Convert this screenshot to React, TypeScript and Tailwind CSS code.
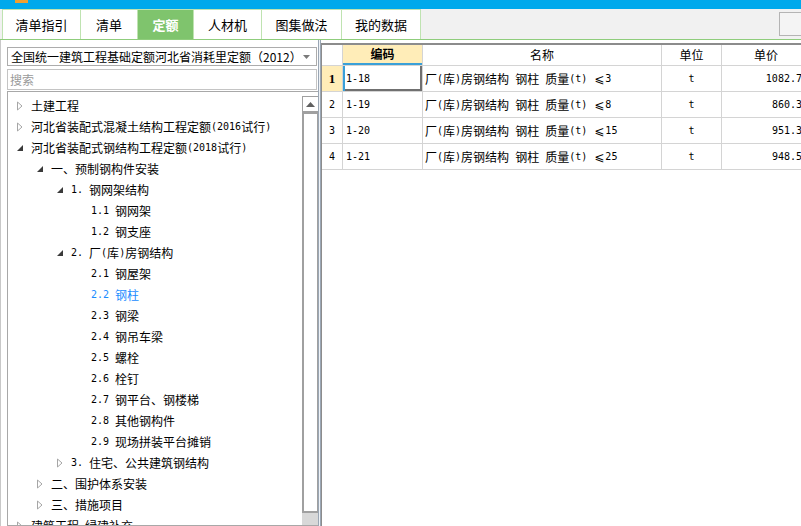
import React from "react";

type Node = { label: string; level: number; state: "open" | "closed" | "leaf"; active?: boolean };

const TREE: Node[] = [
  { label: "土建工程", level: 0, state: "closed" },
  { label: "河北省装配式混凝土结构工程定额(2016试行)", level: 0, state: "closed" },
  { label: "河北省装配式钢结构工程定额(2018试行)", level: 0, state: "open" },
  { label: "一、预制钢构件安装", level: 1, state: "open" },
  { label: "1. 钢网架结构", level: 2, state: "open" },
  { label: "1.1 钢网架", level: 3, state: "leaf" },
  { label: "1.2 钢支座", level: 3, state: "leaf" },
  { label: "2. 厂(库)房钢结构", level: 2, state: "open" },
  { label: "2.1 钢屋架", level: 3, state: "leaf" },
  { label: "2.2 钢柱", level: 3, state: "leaf", active: true },
  { label: "2.3 钢梁", level: 3, state: "leaf" },
  { label: "2.4 钢吊车梁", level: 3, state: "leaf" },
  { label: "2.5 螺栓", level: 3, state: "leaf" },
  { label: "2.6 栓钉", level: 3, state: "leaf" },
  { label: "2.7 钢平台、钢楼梯", level: 3, state: "leaf" },
  { label: "2.8 其他钢构件", level: 3, state: "leaf" },
  { label: "2.9 现场拼装平台摊销", level: 3, state: "leaf" },
  { label: "3. 住宅、公共建筑钢结构", level: 2, state: "closed" },
  { label: "二、围护体系安装", level: 1, state: "closed" },
  { label: "三、措施项目", level: 1, state: "closed" },
  { label: "建筑工程-绿建补充", level: 0, state: "closed" },
];

const ROWS = [
  { code: "1-18", name: "厂(库)房钢结构 钢柱 质量(t) ⩽3", unit: "t", price: "1082.73" },
  { code: "1-19", name: "厂(库)房钢结构 钢柱 质量(t) ⩽8", unit: "t", price: "860.36" },
  { code: "1-20", name: "厂(库)房钢结构 钢柱 质量(t) ⩽15", unit: "t", price: "951.33" },
  { code: "1-21", name: "厂(库)房钢结构 钢柱 质量(t) ⩽25", unit: "t", price: "948.51" },
];

const TABS = [
  { label: "清单指引", w: "w-[79px]" },
  { label: "清单", w: "w-[57px]" },
  { label: "定额", w: "w-[56px]", active: true },
  { label: "人材机", w: "w-[68px]" },
  { label: "图集做法", w: "w-[80px]" },
  { label: "我的数据", w: "w-[79px]" },
];

// half-width runs in a 6px-advance mono, like the old bitmap song font
function Mixed({ text }: { text: string }) {
  const parts = text.split(/([\x20-\x7e]+|⩽)/).filter(Boolean);
  return (
    <>
      {parts.map((p, i) =>
        p === "⩽" ? (
          <span key={i} className="text-[12px] px-[1px]" style={{ fontFamily: '"DejaVu Sans", sans-serif' }}>
            {p}
          </span>
        ) : /^[\x20-\x7e]+$/.test(p) ? (
          <span
            key={i}
            className="text-[10px] whitespace-pre"
            style={{ fontFamily: '"DejaVu Sans Mono", "Liberation Mono", monospace' }}
          >
            {p}
          </span>
        ) : (
          <span key={i}>{p}</span>
        )
      )}
    </>
  );
}

function Arrow({ state }: { state: Node["state"] }) {
  if (state === "closed")
    return (
      <svg width="6" height="10" viewBox="0 0 6 10">
        <path d="M0.5 1 L5 5 L0.5 9 Z" fill="none" stroke="#a6a6a6" />
      </svg>
    );
  if (state === "open")
    return (
      <svg width="6" height="6" viewBox="0 0 6 6">
        <path d="M6 0 L6 6 L0 6 Z" fill="#3a3a3a" />
      </svg>
    );
  return null;
}

export default function App() {
  return (
    <div
      className="w-[801px] h-[526px] overflow-hidden bg-white flex flex-col text-[12px] text-black"
      style={{ fontFamily: '"Noto Sans CJK SC", "Microsoft YaHei", sans-serif' }}
    >
      {/* Title strip */}
      <div className="h-[9px] shrink-0 bg-[#00a9ec] relative">
        <div className="absolute left-[15px] top-0 w-[13px] h-[3px] bg-[#f0a030]" />
      </div>

      {/* Tabs */}
      <div className="h-[31px] shrink-0 bg-[#f1f1f1] flex border-b border-[#8fcd7c] pl-[2px] relative">
        {TABS.map((t, i) => (
          <div
            key={t.label}
            className={`${t.w} h-full flex items-center justify-center text-[13px] border-r border-t border-[#bfe3b1] ${i === 0 ? "border-l" : ""} ${
              t.active ? "bg-[#7fc46d] text-white font-bold" : "bg-white text-black"
            }`}
          >
            {t.label}
          </div>
        ))}
        <div className="absolute left-[779px] top-[3px] w-[30px] h-[24px] border border-[#b4b4b4] bg-[#f4f4f4]" />
      </div>

      {/* Main */}
      <div className="flex flex-1 min-h-0">
        {/* Left panel */}
        <div className="w-[318px] shrink-0 flex flex-col pl-[6px] border-l border-[#c8c8c8]">
          <div className="mt-[7px] h-[19px] w-[310px] border border-[#acacac] flex items-center pl-[3px] pr-[6px]">
            <span className="flex-1 whitespace-nowrap">全国统一建筑工程基础定额河北省消耗里定额（2012）</span>
            <svg width="7" height="4" viewBox="0 0 7 4">
              <path d="M0 0 L7 0 L3.5 4 Z" fill="#7a7a7a" />
            </svg>
          </div>
          <div className="mt-[3px] h-[21px] w-[310px] border border-[#c4c4c4] flex items-center pl-[2px] text-[#9a9a9a]">
            搜索
          </div>
          <div className="mt-[1px] flex-1 w-[312px] border border-[#a8a8a8] flex min-h-0">
            <div className="flex-1 pt-[3px] overflow-hidden">
              {TREE.map((n) => (
                <div
                  key={n.label}
                  className={`h-[21px] flex items-center whitespace-nowrap ${n.active ? "text-[#1a8cff]" : ""}`}
                  style={{ paddingLeft: 9 + n.level * 20 }}
                >
                  <span className="w-[14px] shrink-0 flex items-center">
                    <Arrow state={n.state} />
                  </span>
                  <Mixed text={n.label} />
                </div>
              ))}
            </div>
            {/* Scrollbar */}
            <div className="w-[17px] shrink-0 flex flex-col pt-[4px] mr-[-1px]">
              <div className="h-[16px] border border-[#a0a0a0] flex items-center justify-center bg-white">
                <svg width="9" height="5" viewBox="0 0 9 5">
                  <path d="M4.5 0 L9 5 L0 5 Z" fill="#606060" />
                </svg>
              </div>
              <div className="h-[401px] border-2 border-[#a0a0a0] bg-white" />
              <div className="flex-1 bg-[#d8d8d8]" />
            </div>
          </div>
        </div>

        {/* Splitter */}
        <div className="w-[3px] shrink-0 border-l border-r border-[#9aa6b4] bg-[#eef2f6]" />

        {/* Right panel */}
        <div className="flex-1 min-w-0 overflow-hidden pt-[3px]">
          <div className="h-full border-t-2 border-l border-[#8c8c8c]">
            <div className="w-[490px]">
              <div className="flex h-[21px] border-b border-[#d4d4d4]">
                <div className="w-[21px] border-r border-[#d4d4d4]" />
                <div className="w-[79px] bg-[#ffedb8] font-bold flex items-center justify-center border-b-2 border-[#3aa0d8]">
                  编码
                </div>
                <div className="w-[240px] border-l border-r border-[#d4d4d4] flex items-center justify-center">名称</div>
                <div className="w-[60px] border-r border-[#d4d4d4] flex items-center justify-center">单位</div>
                <div className="w-[88px] flex items-center justify-center">单价</div>
              </div>
              {ROWS.map((r, i) => (
                <div key={r.code} className="flex h-[26px] border-b border-[#d4d4d4]">
                  <div
                    className={`w-[21px] border-r border-[#d4d4d4] flex items-center justify-center ${
                      i === 0 ? "bg-[#ffedb8] font-bold" : ""
                    }`}
                    style={i === 0 ? { fontFamily: '"Liberation Serif", serif', fontSize: 13 } : undefined}
                  >
                    {i === 0 ? "1" : <Mixed text={String(i + 1)} />}
                  </div>
                  <div
                    className={`w-[79px] flex items-center pl-[3px] ${
                      i === 0 ? "shadow-[inset_2px_0_0_#3aa0d8,inset_-2px_-2px_0_#707070]" : ""
                    }`}
                  >
                    <Mixed text={r.code} />
                  </div>
                  <div className="w-[240px] border-l border-r border-[#d4d4d4] flex items-center pl-[2px] whitespace-nowrap">
                    <Mixed text={r.name} />
                  </div>
                  <div className="w-[60px] border-r border-[#d4d4d4] flex items-center justify-center">
                    <Mixed text={r.unit} />
                  </div>
                  <div className="w-[88px] flex items-center justify-end pr-[2px]">
                    <Mixed text={r.price} />
                  </div>
                </div>
              ))}
            </div>
          </div>
        </div>
      </div>
    </div>
  );
}
